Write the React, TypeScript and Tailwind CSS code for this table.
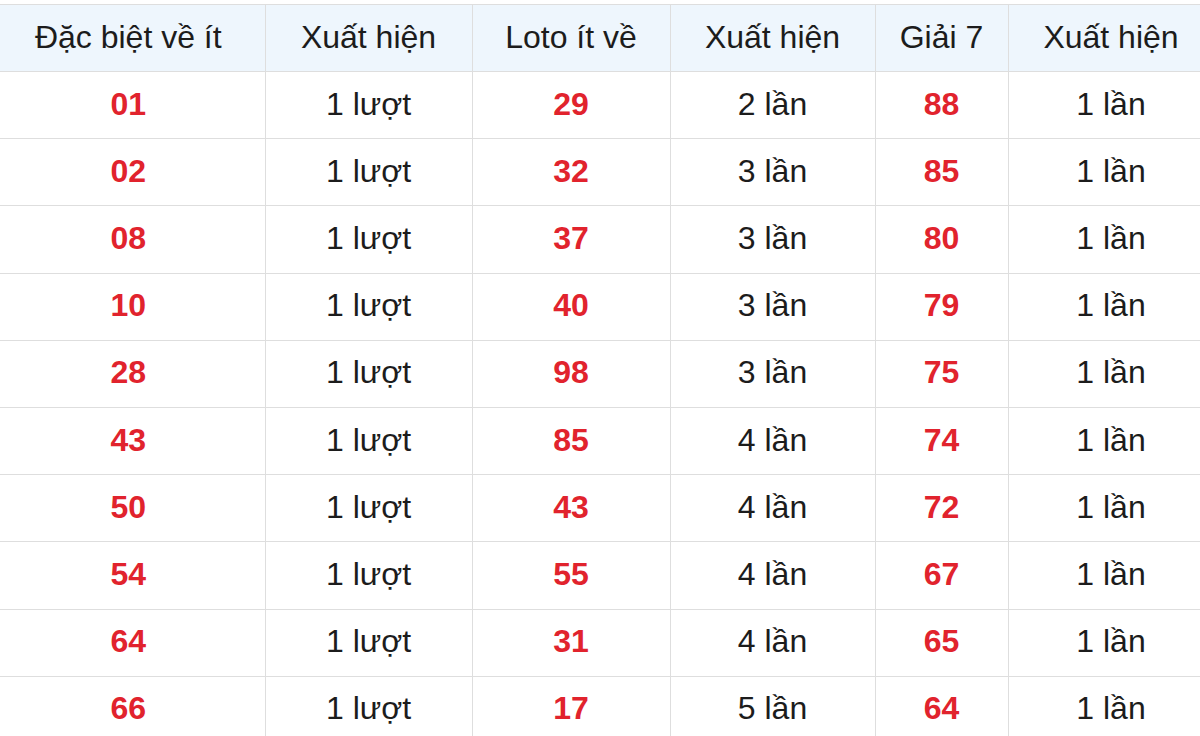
const headers = ["Đặc biệt về ít", "Xuất hiện", "Loto ít về", "Xuất hiện", "Giải 7", "Xuất hiện"];

const rows: [string, string, string, string, string, string][] = [
  ["01", "1 lượt", "29", "2 lần", "88", "1 lần"],
  ["02", "1 lượt", "32", "3 lần", "85", "1 lần"],
  ["08", "1 lượt", "37", "3 lần", "80", "1 lần"],
  ["10", "1 lượt", "40", "3 lần", "79", "1 lần"],
  ["28", "1 lượt", "98", "3 lần", "75", "1 lần"],
  ["43", "1 lượt", "85", "4 lần", "74", "1 lần"],
  ["50", "1 lượt", "43", "4 lần", "72", "1 lần"],
  ["54", "1 lượt", "55", "4 lần", "67", "1 lần"],
  ["64", "1 lượt", "31", "4 lần", "65", "1 lần"],
  ["66", "1 lượt", "17", "5 lần", "64", "1 lần"],
];

const widths = ["w-[273px]", "w-[207px]", "w-[198px]", "w-[205px]", "w-[133px]", "w-[206px]"];

export default function App() {
  return (
    <div className="h-[736px] w-[1200px] overflow-hidden bg-white pt-[4px] font-['Liberation_Sans',Arial,sans-serif]">
      <table className="-ml-[8px] w-[1222px] table-fixed border-collapse text-[32px] leading-none text-[#1c1c1c]">
        <thead>
          <tr className="h-[67px] bg-[#eef6fd]">
            {headers.map((h, i) => (
              <th
                key={i}
                className={`${widths[i]} border border-[#dedede] pb-[3px] font-normal text-center ${i === 0 ? "border-l-0" : ""}`}
              >
                {h}
              </th>
            ))}
          </tr>
        </thead>
        <tbody>
          {rows.map((r, ri) => (
            <tr key={ri} className="h-[67.2px]">
              {r.map((c, ci) => (
                <td
                  key={ci}
                  className={`border border-[#dedede] pb-[3px] text-center ${ci === 0 ? "border-l-0" : ""} ${
                    ci % 2 === 0 ? "font-bold text-[#e1232d]" : ""
                  }`}
                >
                  {c}
                </td>
              ))}
            </tr>
          ))}
        </tbody>
      </table>
    </div>
  );
}
